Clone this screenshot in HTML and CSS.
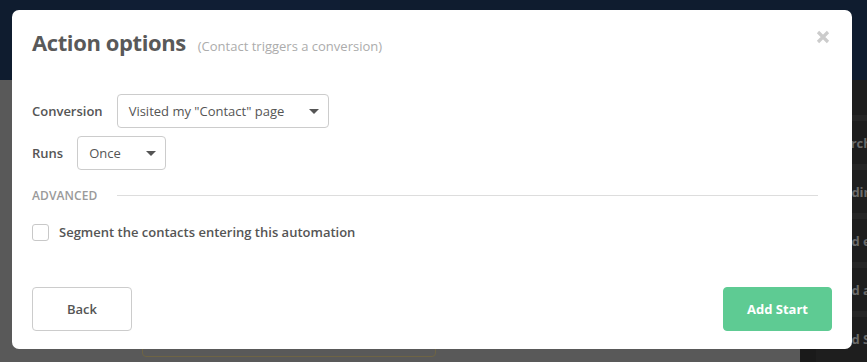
FILE: index.html
```html
<!DOCTYPE html>
<html lang="en">
<head>
<meta charset="utf-8">
<title>Action options</title>
<link rel="stylesheet" href="styles.css">
</head>
<body>
<div class="page">
  <header class="topbar">
    <div class="topbar-tab"></div>
  </header>
  <div class="workspace">
    <main class="canvas">
      <div class="card-ghost"></div>
    </main>
    <aside class="sidebar">
      <div class="side-row"><span class="side-label">Search</span></div>
      <div class="side-row"><span class="side-label">Sending</span></div>
      <div class="side-row"><span class="side-label">Send email</span></div>
      <div class="side-row"><span class="side-label">Send a</span></div>
      <div class="side-row"><span class="side-label">Send SMS</span></div>
    </aside>
  </div>
</div>

<div class="modal">
  <div class="modal-head">
    <h1 class="modal-title">Action options</h1>
    <span class="modal-sub">(Contact triggers a conversion)</span>
    <button class="modal-close" aria-label="Close">
      <svg width="14" height="14" viewBox="0 0 14 14"><path d="M2 2 L12 12 M12 2 L2 12" stroke="#cccccc" stroke-width="3.2" stroke-linecap="butt" fill="none"/></svg>
    </button>
  </div>

  <div class="modal-body">
    <div class="field-row">
      <span class="field-label">Conversion</span>
      <div class="select select-wide">
        <span class="select-text">Visited my "Contact" page</span>
        <span class="caret"></span>
      </div>
    </div>
    <div class="field-row">
      <span class="field-label">Runs</span>
      <div class="select select-narrow">
        <span class="select-text">Once</span>
        <span class="caret"></span>
      </div>
    </div>

    <div class="section-divider">
      <span class="section-title">ADVANCED</span>
      <span class="section-line"></span>
    </div>

    <label class="check-row">
      <span class="checkbox"></span>
      <span class="check-text">Segment the contacts entering this automation</span>
    </label>
  </div>

  <div class="modal-foot">
    <button class="btn btn-back">Back</button>
    <button class="btn btn-primary">Add Start</button>
  </div>
</div>
</body>
</html>
```

FILE: styles.css
```css
* { box-sizing: border-box; }

html, body {
  margin: 0;
  padding: 0;
  width: 867px;
  height: 362px;
  overflow: hidden;
  font-family: "Open Sans", "Liberation Sans", sans-serif;
}

.page {
  width: 867px;
  height: 362px;
  display: flex;
  flex-direction: column;
  background: #595959;
}

.topbar {
  height: 80px;
  background: #0f1c2f;
  flex: none;
}

.topbar-tab {
  margin-left: 110px;
  width: 230px;
  height: 80px;
  background: #101e34;
}

.workspace {
  flex: 1;
  display: flex;
}

.canvas {
  flex: 1;
  background: #595959;
  padding-left: 142px;
  padding-top: 240px;
}

.card-ghost {
  width: 294px;
  height: 37px;
  border: 1px solid #6e6444;
  border-radius: 4px;
}

.sidebar {
  width: 67px;
  background: #1e1e1e;
  padding-top: 35px;
  border-left: 16px solid #1a1a1a;
}

.side-row {
  height: 49px;
  border-top: 6px solid #262626;
  display: flex;
  align-items: center;
  overflow: hidden;
  white-space: nowrap;
  padding-left: 12px;
}

.side-label {
  color: #6a6a6a;
  font-size: 13px;
  font-weight: 700;
}

/* Modal */
.modal {
  position: absolute;
  left: 12px;
  top: 10px;
  width: 840px;
  height: 339px;
  background: #ffffff;
  border-radius: 7px;
  padding: 16px 20px 18px 20px;
  display: flex;
  flex-direction: column;
}

.modal-head {
  display: flex;
  align-items: baseline;
  position: relative;
}

.modal-title {
  margin: 0;
  font-size: 22px;
  line-height: 32px;
  font-weight: 700;
  color: #595959;
  letter-spacing: -0.4px;
}

.modal-sub {
  margin-left: 12px;
  font-size: 13px;
  color: #acacac;
}

.modal-close {
  position: absolute;
  right: 2px;
  top: 4px;
  border: 0;
  padding: 0;
  background: transparent;
  width: 14px;
  height: 14px;
  display: flex;
}

.modal-body {
  margin-top: 36px;
  display: flex;
  flex-direction: column;
}

.field-row {
  display: flex;
  align-items: center;
  gap: 14px;
  margin-bottom: 8px;
}

.field-label {
  font-size: 13px;
  font-weight: 600;
  color: #555555;
}

.select {
  height: 34px;
  border: 1px solid #cccccc;
  border-radius: 4px;
  display: flex;
  align-items: center;
  justify-content: space-between;
  padding: 0 9px 0 11px;
}

.select-wide { width: 212px; }
.select-narrow { width: 89px; }

.select-text {
  font-size: 13px;
  color: #555555;
}

.caret {
  width: 0;
  height: 0;
  border-left: 5px solid transparent;
  border-right: 5px solid transparent;
  border-top: 5px solid #555555;
}

.section-divider {
  display: flex;
  align-items: center;
  margin-top: 0;
  height: 34px;
}

.section-title {
  font-size: 12px;
  font-weight: 600;
  color: #9a9a9a;
  letter-spacing: 0.1px;
}

.section-line {
  margin-left: 20px;
  width: 701px;
  height: 1px;
  background: #dddddd;
}

.check-row {
  display: flex;
  align-items: center;
  margin-top: 11px;
}

.checkbox {
  width: 17px;
  height: 17px;
  border: 1px solid #c8c8c8;
  border-radius: 3px;
  flex: none;
}

.check-text {
  margin-left: 10px;
  font-size: 13px;
  font-weight: 600;
  color: #555555;
}

.modal-foot {
  margin-top: auto;
  display: flex;
  justify-content: space-between;
}

.btn {
  height: 44px;
  border-radius: 4px;
  font-family: "Open Sans", "Liberation Sans", sans-serif;
  font-size: 13px;
  font-weight: 600;
  cursor: pointer;
}

.btn-back {
  width: 100px;
  background: #ffffff;
  border: 1px solid #cccccc;
  color: #555555;
}

.btn-primary {
  width: 109px;
  background: #5ecb93;
  border: 1px solid #5ecb93;
  color: #ffffff;
  font-weight: 700;
}
```
